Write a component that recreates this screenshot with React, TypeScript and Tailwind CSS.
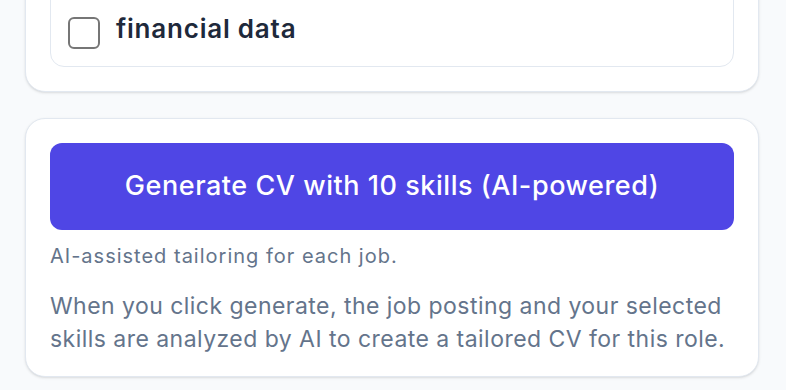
export default function App() {
  return (
    <div className="min-h-screen w-full overflow-hidden bg-[#f8fafc] pl-[25px] font-['Inter','Liberation_Sans',sans-serif]">
      <div className="-mt-[40px] flex w-[734px] flex-col gap-[26px]">
        <section className="rounded-[20px] border border-[#e2e8f0] bg-white p-6 shadow-sm">
          <div className="rounded-[14px] border border-[#e2e8f0] bg-white pt-[25px] pr-[17px] pb-[17px] pl-[17px]">
            <label className="flex items-start gap-4">
              <span className="mt-[6px] block h-[32px] w-[32px] shrink-0 rounded-[6px] border-2 border-[#767676] bg-white" />
              <span className="text-[26px] leading-[36px] font-semibold tracking-[0.03em] text-[#1e293b]">
                financial data
              </span>
            </label>
          </div>
        </section>

        <section className="rounded-[20px] border border-[#e2e8f0] bg-white px-6 pt-6 pb-5 shadow-sm">
          <button
            type="button"
            className="flex h-[87px] w-full items-center justify-center rounded-[12px] bg-[#4f46e5] text-[27px] font-medium tracking-[0.02em] text-white"
          >
            Generate CV with 10 skills (AI-powered)
          </button>
          <p className="mt-[12px] text-[20px] leading-[28px] tracking-[0.05em] text-[#64748b]">
            AI-assisted tailoring for each job.
          </p>
          <p className="mt-[20px] text-[23px] leading-[33px] tracking-[0.02em] text-[#64748b]">
            When you click generate, the job posting and your selected skills are analyzed by AI to
            create a tailored CV for this role.
          </p>
        </section>
      </div>
    </div>
  );
}
